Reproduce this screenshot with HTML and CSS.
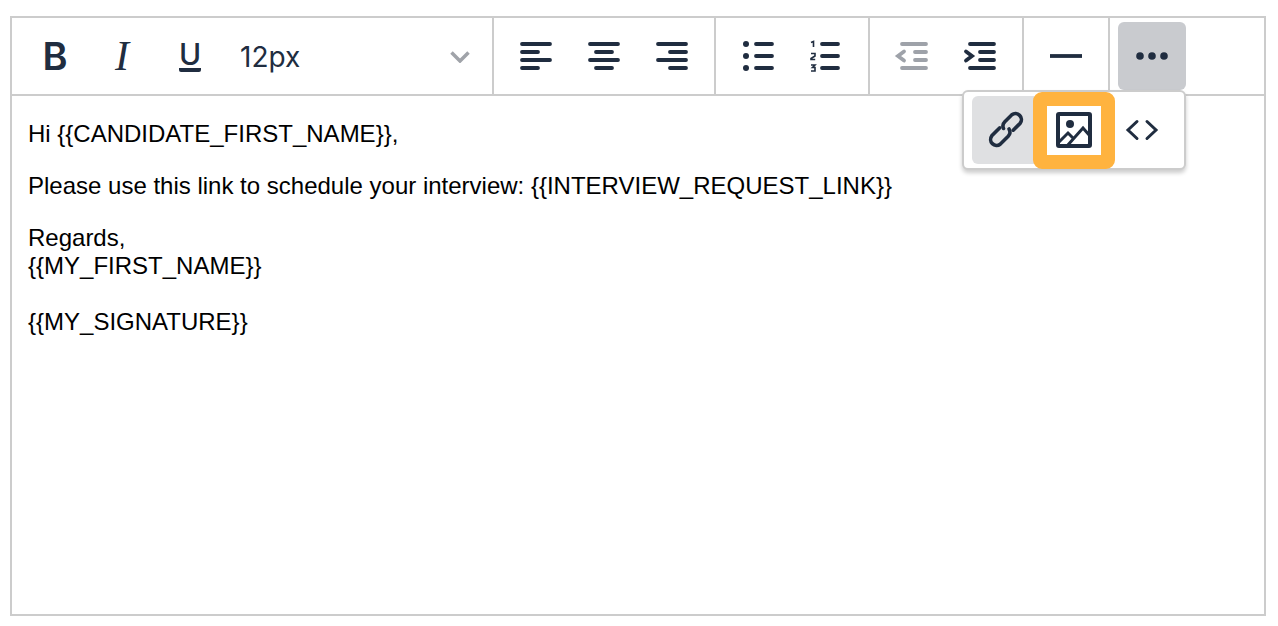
FILE: index.html
```html
<!DOCTYPE html>
<html lang="en">

<head>
  <meta charset="UTF-8">
  <meta name="viewport" content="width=device-width, initial-scale=1.0">
  <title>Email template editor</title>
  <link rel="stylesheet" href="styles.css">
</head>

<body>
  <div class="editor">
    <div class="toolbar">
      <div class="tool-group">
        <button class="tool-btn tool-bold">B</button>
        <button class="tool-btn tool-italic">I</button>
        <button class="tool-btn tool-underline"><span>U</span></button>
        <div class="size-select">
          <span>12px</span>
          <svg class="size-arrow" width="20" height="12" viewBox="0 0 20 12">
            <polyline points="1.5,1.5 10,10 18.5,1.5" />
          </svg>
        </div>
      </div>

      <div class="tool-group">
        <button class="tool-btn">
          <svg class="icon" width="32" height="32" viewBox="0 0 32 32">
            <path d="M2 4H30M2 12H18M2 20H30M2 28H18" />
          </svg>
        </button>
        <button class="tool-btn">
          <svg class="icon" width="32" height="32" viewBox="0 0 32 32">
            <path d="M2 4H30M8 12H24M2 20H30M8 28H24" />
          </svg>
        </button>
        <button class="tool-btn">
          <svg class="icon" width="32" height="32" viewBox="0 0 32 32">
            <path d="M2 4H30M14 12H30M2 20H30M14 28H30" />
          </svg>
        </button>
      </div>

      <div class="tool-group">
        <button class="tool-btn">
          <svg class="icon" width="32" height="32" viewBox="0 0 32 32">
            <path d="M14 4H30M14 16H30M14 28H30" />
            <circle class="dot" cx="4" cy="4" r="3" />
            <circle class="dot" cx="4" cy="16" r="3" />
            <circle class="dot" cx="4" cy="28" r="3" />
          </svg>
        </button>
        <button class="tool-btn">
          <svg class="icon" width="32" height="32" viewBox="0 0 32 32">
            <path d="M12 4H28M12 16H28M12 28H28" />
            <path class="digit" d="M1 2.5L3.5 1.5V7M1 13.5H5V16L1 18.5V19.5H5.2M1 25H5L2.5 27.5H5V31H1" />
          </svg>
        </button>
      </div>

      <div class="tool-group">
        <button class="tool-btn">
          <svg class="icon icon-off" width="32" height="32" viewBox="0 0 32 32">
            <path d="M6 4H30M19 12H30M19 20H30M6 28H30" />
            <polyline points="8,11.5 2,16 8,20.5" />
          </svg>
        </button>
        <button class="tool-btn">
          <svg class="icon" width="32" height="32" viewBox="0 0 32 32">
            <path d="M6 4H30M16 12H30M16 20H30M6 28H30" />
            <polyline points="2,11.5 8,16 2,20.5" />
          </svg>
        </button>
      </div>

      <div class="tool-group">
        <button class="tool-btn">
          <svg class="icon" width="32" height="32" viewBox="0 0 32 32">
            <path class="flat" d="M0 16H32" />
          </svg>
        </button>
      </div>

      <div class="tool-group tool-group-last">
        <div class="more-wrap">
          <button class="tool-btn tool-btn-active">
            <svg class="icon" width="32" height="32" viewBox="0 0 32 32">
              <circle class="dot" cx="4" cy="16" r="3.8" />
              <circle class="dot" cx="16" cy="16" r="3.8" />
              <circle class="dot" cx="28" cy="16" r="3.8" />
            </svg>
          </button>

          <div class="more-menu">
            <button class="tool-btn tool-btn-hover">
              <svg class="icon icon-link" width="36" height="36" viewBox="0 0 36 36">
                <path d="M25.2 18.2L32.2 11.2A6 6 0 0 0 23.8 2.8L16.8 9.8A6 6 0 0 0 15.5 16.5" />
                <path d="M11.8 15.8L3.8 23.8A6 6 0 0 0 12.2 32.2L20.2 24.2A6 6 0 0 0 21 17" />
              </svg>
            </button>
            <button class="tool-btn tool-btn-marked">
              <svg class="icon icon-image" width="36" height="36" viewBox="0 0 36 36">
                <rect x="2" y="2" width="32" height="32" rx="1" />
                <circle class="dot" cx="14" cy="12" r="4" />
                <path d="M3 30L12 21L17 26M11 34L27 16L34 24" />
              </svg>
            </button>
            <button class="tool-btn">
              <svg class="icon icon-code" width="32" height="20" viewBox="0 0 32 20">
                <polyline points="11,1.5 2,10 11,18.5" />
                <polyline points="21,1.5 30,10 21,18.5" />
              </svg>
            </button>
          </div>
        </div>
      </div>
    </div>

    <div class="editor-body">
      <p>Hi {{CANDIDATE_FIRST_NAME}},</p>
      <p>Please use this link to schedule your interview: {{INTERVIEW_REQUEST_LINK}}</p>
      <p>Regards,<br>{{MY_FIRST_NAME}}<br><br>{{MY_SIGNATURE}}</p>
    </div>
  </div>
</body>

</html>
```

FILE: styles.css
```css
* {
  padding: 0;
  margin: 0;
  box-sizing: border-box;
}

body {
  background: #FFFFFF;
  padding: 16px 12px 10px 10px;
}

.editor {
  height: 600px;
  border: 2px solid #CCCCCC;
}

.toolbar {
  display: flex;
  height: 78px;
  border-bottom: 2px solid #CCCCCC;
}

.tool-group {
  display: flex;
  align-items: center;
  padding: 0 8px;
  border-right: 2px solid #CCCCCC;
}

.tool-group-last {
  border-right: 0;
}

.tool-btn {
  position: relative;
  display: flex;
  justify-content: center;
  align-items: center;
  width: 68px;
  height: 68px;
  border: 0;
  border-radius: 6px;
  background: transparent;
  color: #202D40;
}

.tool-btn-active {
  background: #C9CBCF;
}

.tool-btn-hover {
  background: #DFE0E2;
}

/* orange frame around the image button */
.tool-btn-marked::after {
  content: "";
  position: absolute;
  top: -4px;
  left: -7px;
  right: -7px;
  bottom: -5px;
  border: 14px solid #FFB33F;
  border-radius: 9px;
}

.tool-bold {
  padding: 0 0 0 2px;
  font-family: Inter, sans-serif;
  font-size: 38px;
  font-weight: 600;
}

.tool-italic {
  font-family: "Liberation Serif", serif;
  font-size: 42px;
  font-style: italic;
}

.tool-underline {
  font-family: Inter, sans-serif;
  font-size: 30px;
  font-weight: 500;
}

.tool-underline span {
  display: block;
  line-height: 28px;
  border-bottom: 4px solid #202D40;
  border-radius: 2px;
}

.size-select {
  display: flex;
  justify-content: space-between;
  align-items: center;
  width: 260px;
  padding: 2px 14px 0 16px;
  font-family: Inter, sans-serif;
  font-size: 28px;
  color: #202D40;
}

.size-arrow polyline {
  fill: none;
  stroke: #A0A3A9;
  stroke-width: 3.5;
}

.icon {
  display: block;
  overflow: visible;
}

.icon path,
.icon polyline,
.icon rect {
  fill: none;
  stroke: #202D40;
  stroke-width: 3.8;
  stroke-linecap: round;
}

.icon .dot {
  fill: #202D40;
  stroke: none;
}

.icon .digit {
  stroke-width: 1.6;
  stroke-linecap: butt;
}

.icon .flat {
  stroke-linecap: butt;
}

.icon-off path,
.icon-off polyline {
  stroke: #9EA2A9;
}

.icon-link path {
  stroke-width: 3.6;
}

.icon-image path {
  stroke-width: 3;
  stroke-linecap: butt;
}

.icon-image rect {
  stroke-width: 4;
}

.icon-code polyline {
  stroke-width: 3;
}

.more-wrap {
  position: relative;
}

.more-menu {
  position: absolute;
  top: 100%;
  right: 0;
  display: flex;
  padding: 4px 8px;
  background: #FFFFFF;
  border: 2px solid #CCCCCC;
  border-radius: 6px;
  box-shadow: 0 3px 4px rgba(0, 0, 0, 0.2);
}

.editor-body {
  padding: 24px 16px;
  font-family: "Liberation Sans", Arial, sans-serif;
  font-size: 24px;
  line-height: 28px;
  color: #000000;
}

.editor-body p {
  margin-bottom: 24px;
}
```
